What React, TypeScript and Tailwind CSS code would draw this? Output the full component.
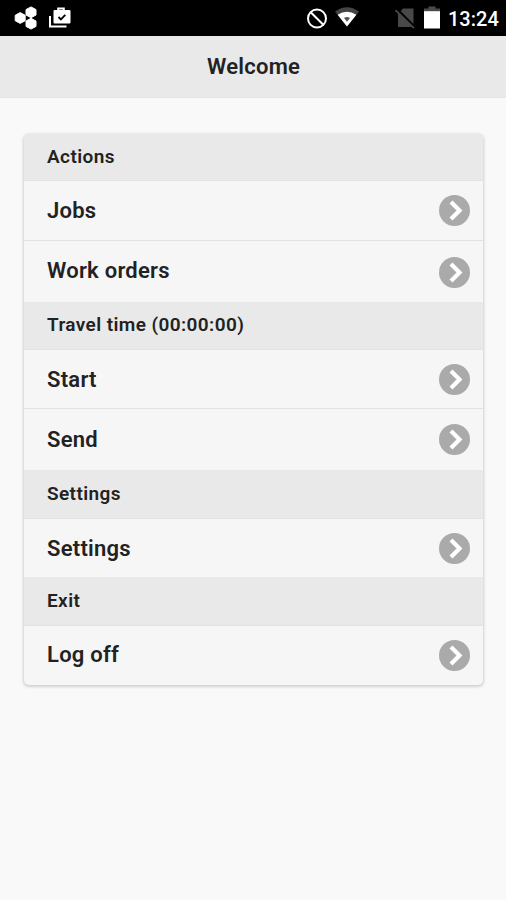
import clsx from 'clsx';

interface MenuItem {
  label: string;
  height: string;
  offset: string;
}

interface MenuSection {
  title: string;
  height: string;
  items: MenuItem[];
}

const sections: MenuSection[] = [
  {
    title: 'Actions',
    height: 'h-[47px] pb-0.5',
    items: [
      { label: 'Jobs', height: 'h-[60px]', offset: 'pt-px' },
      { label: 'Work orders', height: 'h-[61px] pt-px', offset: '-mt-[3px]' },
    ],
  },
  {
    title: 'Travel time (00:00:00)',
    height: 'h-12 pb-0.5',
    items: [
      { label: 'Start', height: 'h-[59px]', offset: 'pt-px' },
      { label: 'Send', height: 'h-[61px]', offset: 'pt-0' },
    ],
  },
  {
    title: 'Settings',
    height: 'h-[49px] pb-0.5',
    items: [{ label: 'Settings', height: 'h-[58px]', offset: 'pt-px' }],
  },
  {
    title: 'Exit',
    height: 'h-[49px] pb-0.5',
    items: [{ label: 'Log off', height: 'h-[59px] pb-px', offset: 'pt-0' }],
  },
];

const StatusBar = () => (
  <div className="flex h-9 items-center bg-black text-white">
    <svg className="ml-3.5 h-6 w-6" viewBox="0 0 24 24" fill="currentColor" stroke="currentColor" strokeLinejoin="round">
      <path d="M17 0.900l5 2.700v5.400l-5 2.700-5-2.700V3.600z" />
      <path d="M6.200 6.600l5 2.700v5.400l-5 2.700-5-2.700V9.300z" />
      <path d="M17 12.300l5 2.700v5.400l-5 2.700-5-2.700V15z" />
    </svg>
    <svg className="ml-2.5 h-6 w-6" viewBox="0 0 24 24">
      <path d="M2 10v10.500h16.500" fill="none" stroke="currentColor" strokeWidth="2" />
      <path d="M10.200 4.500V2.500h5.600v2" fill="none" stroke="currentColor" strokeWidth="2" />
      <rect x="5.500" y="4" width="17" height="13.500" rx="1" fill="currentColor" />
      <path d="M10.500 11l2.400 2.400 4.400-4.600" fill="none" stroke="#000" strokeWidth="1.800" />
    </svg>
    <svg className="ml-[234px] h-[22px] w-[22px]" viewBox="0 0 22 22" fill="none" stroke="currentColor" strokeWidth="2">
      <circle cx="11" cy="11.5" r="9" />
      <path d="M4.700 5.200l12.600 12.600" />
    </svg>
    <svg className="ml-[7px] h-[22px] w-6" viewBox="0 0 24 22">
      <path d="M0 4.500Q12-4 24 4.500L12 19.500z" fill="#444" />
      <path d="M2.600 7.700Q12 1.700 21.400 7.700L12 19.500z" fill="currentColor" />
      <path d="M9 11Q12 9.200 15 11L12 14.800z" fill="#555" />
    </svg>
    <svg className="ml-9 h-6 w-5" viewBox="0 0 20 24">
      <path d="M8 2.500h10.500v18.500H3V8z" fill="#484848" />
      <path d="M1.500 3l19 19" stroke="#000" strokeWidth="3" />
      <path d="M0.500 4.200l18.500 18" stroke="#484848" strokeWidth="1.700" />
    </svg>
    <svg className="ml-[9px] h-6 w-4" viewBox="0 0 16 24">
      <path d="M4.500 0.500h7v2H16V6H0V2.500h4.500z" fill="#4a4a4a" />
      <path d="M0 5.200h16V22.500H0z" fill="currentColor" />
    </svg>
    <span className="ml-2 pt-0.5 text-[20px] leading-none font-medium">13:24</span>
  </div>
);

const ArrowIcon = () => (
  <svg className="h-[31px] w-[31px] shrink-0" viewBox="0 0 31 31">
    <circle cx="15.500" cy="15.500" r="15.500" fill="#aaa" />
    <path d="M12 7l8.500 8.500-8.500 8.500" fill="none" stroke="#fff" strokeWidth="4.200" />
  </svg>
);

export default function App() {
  return (
    <div className="min-h-[900px] w-full bg-[#f9f9f9] font-['Roboto',sans-serif] text-[#222]">
      <StatusBar />
      <header className="flex h-[62px] items-center justify-center border-b border-[#e5e5e5] bg-[#e9e9e9]">
        <h1 className="pt-px pl-px text-[22px] leading-none font-semibold tracking-[0.25px]">Welcome</h1>
      </header>
      <main className="px-6 pt-9">
        <div className="w-[459px] overflow-hidden rounded-[5px] bg-[#f6f6f6] shadow-[0_1px_3px_1px_rgba(0,0,0,0.16)]">
          {sections.map((section) => (
            <section key={section.title}>
              <h2
                className={clsx(
                  'flex items-center border-b border-[#e3e3e3] bg-[#e9e9e9] pl-[23px] text-[19px] leading-none font-semibold tracking-[0.4px]',
                  section.height,
                )}
              >
                {section.title}
              </h2>
              <ul>
                {section.items.map((item) => (
                  <li
                    key={item.label}
                    className={clsx(
                      'flex items-center justify-between border-b border-[#e2e2e2] pr-[13px] pl-[23px] last:border-b-0',
                      item.height,
                    )}
                  >
                    <span className={clsx('text-[22px] leading-none font-semibold tracking-[0.25px]', item.offset)}>
                      {item.label}
                    </span>
                    <ArrowIcon />
                  </li>
                ))}
              </ul>
            </section>
          ))}
        </div>
      </main>
    </div>
  );
}
